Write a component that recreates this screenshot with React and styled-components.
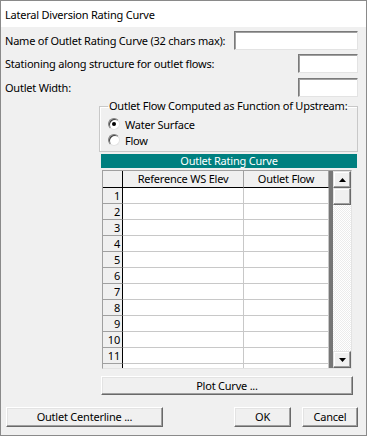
import { Fragment } from "react";
import styled, { createGlobalStyle } from "styled-components";

const GlobalStyle = createGlobalStyle`
  html, body {
    margin: 0;
    padding: 0;
    background: #f0f0f0;
  }
  * {
    box-sizing: border-box;
  }
`;

const Window = styled.div`
  width: 367px;
  height: 436px;
  border: 1px solid #8a8a8a;
  background: #f0f0f0;
  font-family: "Noto Sans", "Open Sans", sans-serif;
  font-size: 11px;
  letter-spacing: -0.22px;
  color: #000;
  display: flex;
  flex-direction: column;
`;

const TitleBar = styled.div`
  height: 26px;
  background: #fff;
  display: flex;
  align-items: center;
  padding-left: 4px;
`;

const Body = styled.div`
  flex: 1;
  display: flex;
  flex-direction: column;
  padding: 4px 8px 0 4px;
`;

const FieldRow = styled.div`
  display: flex;
  align-items: center;
  justify-content: space-between;
  height: ${p => p.h || 19}px;
  margin-top: ${p => p.mt || 0}px;
`;

const Label = styled.span`
  white-space: nowrap;
  line-height: 14px;
`;

const TextBox = styled.div`
  width: ${p => p.w}px;
  height: 100%;
  background: #fff;
  border: 1px solid;
  border-color: #7a7a7a #e3e3e3 #e3e3e3 #7a7a7a;
  box-shadow: inset 1px 1px 0 #a0a0a0;
`;

const RightColumn = styled.div`
  margin-left: 94px;
  display: flex;
  flex-direction: column;
`;

const GroupBox = styled.fieldset`
  margin: 2px 0 0 0;
  padding: 3px 8px 3px 8px;
  border: 1px solid #c8c8c8;
  box-shadow: inset 1px 1px 0 #fff;
  min-width: 0;
`;

const Legend = styled.legend`
  padding: 0 1px;
  line-height: 14px;
  white-space: nowrap;
`;

const RadioRow = styled.div`
  display: flex;
  align-items: center;
  height: 16px;
  gap: 5px;
`;

const Radio = styled.span`
  width: 12px;
  height: 12px;
  border-radius: 50%;
  border: 1px solid;
  border-color: #808080 #e3e3e3 #e3e3e3 #808080;
  background: #fff;
  box-shadow: inset 1px 1px 0 #404040;
  display: flex;
  align-items: center;
  justify-content: center;
  &::after {
    content: "";
    width: 4px;
    height: 4px;
    border-radius: 50%;
    background: ${p => (p.checked ? "#000" : "transparent")};
  }
`;

const GridTitle = styled.div`
  margin: 2px 1px 0 2px;
  height: 14px;
  background: #008080;
  color: #fff;
  display: flex;
  align-items: center;
  justify-content: center;
  line-height: 14px;
`;

const Grid = styled.div`
  margin: 2px 0 0 3px;
  width: 250px;
  height: 199px;
  border: 1px solid;
  border-color: #a0a0a0 #e3e3e3 #e3e3e3 #a0a0a0;
  display: flex;
  overflow: hidden;
`;

const Cells = styled.div`
  width: 230px;
  display: grid;
  grid-template-columns: 20px 121px 85px 4px;
  grid-auto-rows: 16px;
  grid-template-rows: 17px;
  background: #fff;
`;

const HeadCell = styled.div`
  background: #f0f0f0;
  border-bottom: 1px solid #000;
  border-right: 1px solid ${p => (p.dark ? "#000" : "#a0a0a0")};
  display: flex;
  align-items: center;
  justify-content: center;
  line-height: 14px;
`;

const RowNum = styled.div`
  background: #f0f0f0;
  border-right: 1px solid #000;
  border-bottom: 1px solid #a0a0a0;
  display: flex;
  align-items: center;
  justify-content: flex-end;
  padding-right: 2px;
  line-height: 14px;
`;

const DataCell = styled.div`
  border-right: 1px solid #c8c8c8;
  border-bottom: 1px solid #c8c8c8;
`;

const Gutter = styled.div`
  background: #767676;
`;

const ScrollBar = styled.div`
  width: 18px;
  display: flex;
  flex-direction: column;
  background: repeating-conic-gradient(#fff 0 25%, #ececec 0 50%) 0 0 / 2px 2px;
`;

const ScrollButton = styled.div`
  height: 17px;
  background: #f0f0f0;
  border: 1px solid;
  border-color: #e3e3e3 #696969 #696969 #e3e3e3;
  box-shadow: inset -1px -1px 0 #a0a0a0, inset 1px 1px 0 #fff;
  display: flex;
  align-items: center;
  justify-content: center;
`;

const Track = styled.div`
  flex: 1;
`;

const Button = styled.div`
  width: ${p => p.w}px;
  height: ${p => p.h || 20}px;
  margin-left: ${p => p.ml || 0}px;
  background: #f0f0f0;
  border: 1px solid;
  border-color: #fff #696969 #696969 #fff;
  box-shadow: inset -1px -1px 0 #a0a0a0, inset 1px 1px 0 #e3e3e3;
  display: flex;
  align-items: center;
  justify-content: center;
  line-height: 14px;
`;

const PlotRow = styled.div`
  margin: 7px 0 0 2px;
`;

const BottomRow = styled.div`
  display: flex;
  align-items: center;
  margin-top: 12px;
  padding-left: 1px;
`;

const Spacer = styled.div`
  flex: 1;
`;

const Arrow = ({ down }) => (
  <svg width="7" height="4" viewBox="0 0 7 4">
    <path d={down ? "M0 0h7L3.5 4z" : "M0 4h7L3.5 0z"} fill="#000" />
  </svg>
);

// row 12 only peeks out under row 11, its number is hidden by the grid edge
const rows = Array.from({ length: 12 }, (_, i) => (i < 11 ? i + 1 : ""));

export default function App() {
  return (
    <>
      <GlobalStyle />
      <Window>
        <TitleBar>Lateral Diversion Rating Curve</TitleBar>
        <Body>
          <FieldRow>
            <Label>Name of Outlet Rating Curve (32 chars max):</Label>
            <TextBox w={124} />
          </FieldRow>
          <FieldRow mt={4}>
            <Label>Stationing along structure for outlet flows:</Label>
            <TextBox w={60} />
          </FieldRow>
          <FieldRow mt={5}>
            <Label>Outlet Width:</Label>
            <TextBox w={60} />
          </FieldRow>

          <RightColumn>
            <GroupBox>
              <Legend>Outlet Flow Computed as Function of Upstream:</Legend>
              <RadioRow>
                <Radio checked />
                <span>Water Surface</span>
              </RadioRow>
              <RadioRow>
                <Radio />
                <span>Flow</span>
              </RadioRow>
            </GroupBox>

            <GridTitle>Outlet Rating Curve</GridTitle>

            <Grid>
              <Cells>
                <HeadCell dark />
                <HeadCell>Reference WS Elev</HeadCell>
                <HeadCell>Outlet Flow</HeadCell>
                <Gutter />
                {rows.map((n, i) => (
                  <Fragment key={i}>
                    <RowNum>{n}</RowNum>
                    <DataCell />
                    <DataCell />
                    <Gutter />
                  </Fragment>
                ))}
              </Cells>
              <ScrollBar>
                <ScrollButton>
                  <Arrow />
                </ScrollButton>
                <ScrollButton />
                <Track />
                <ScrollButton>
                  <Arrow down />
                </ScrollButton>
              </ScrollBar>
            </Grid>

            <PlotRow>
              <Button w={252} h={19}>Plot Curve ...</Button>
            </PlotRow>
          </RightColumn>

          <BottomRow>
            <Button w={157}>Outlet Centerline ...</Button>
            <Spacer />
            <Button w={57}>OK</Button>
            <Button w={56} ml={11}>Cancel</Button>
          </BottomRow>
        </Body>
      </Window>
    </>
  );
}
